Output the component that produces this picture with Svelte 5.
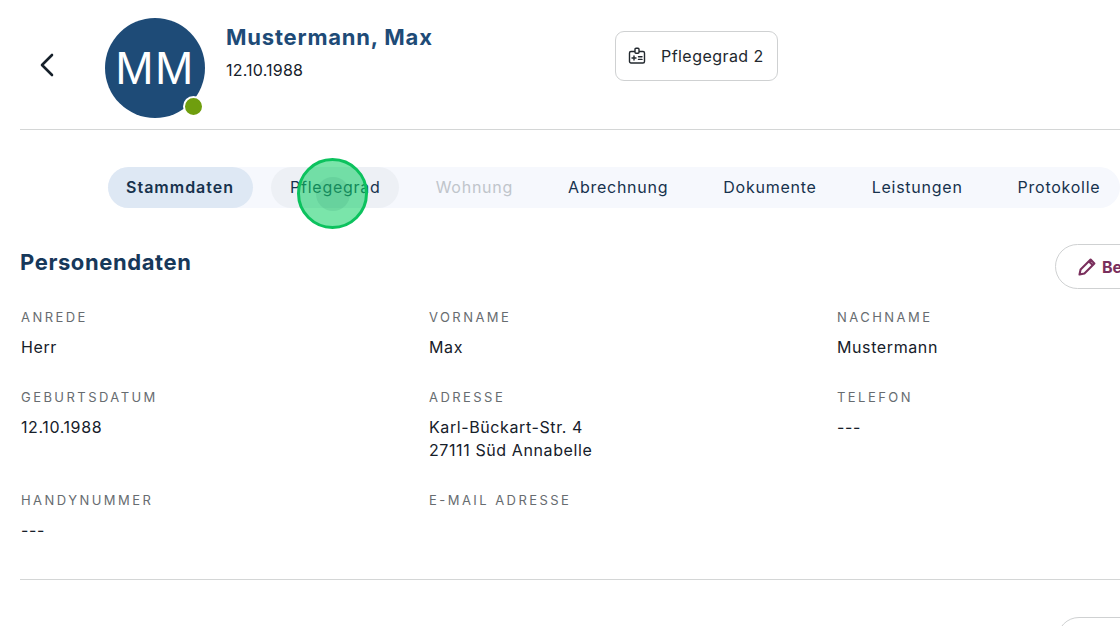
<script>
const tabs = [
  { label: 'Stammdaten', cls: 'active' },
  { label: 'Pflegegrad', cls: 'hover' },
  { label: 'Wohnung', cls: 'disabled' },
  { label: 'Abrechnung', cls: '' },
  { label: 'Dokumente', cls: '' },
  { label: 'Leistungen', cls: '' },
  { label: 'Protokolle', cls: '' }
];

const fields = [
  { label: 'Anrede', lines: ['Herr'] },
  { label: 'Vorname', lines: ['Max'] },
  { label: 'Nachname', lines: ['Mustermann'] },
  { label: 'Geburtsdatum', lines: ['12.10.1988'] },
  { label: 'Adresse', lines: ['Karl-Bückart-Str. 4', '27111 Süd Annabelle'] },
  { label: 'Telefon', lines: ['---'] },
  { label: 'Handynummer', lines: ['---'] },
  { label: 'E-Mail Adresse', lines: [] }
];
</script>

<style>
  :global(body) {
    margin: 0;
    background: #fff;
  }
  .page {
    position: relative;
    width: 1120px;
    height: 626px;
    overflow: hidden;
    font-family: Inter, "Liberation Sans", sans-serif;
    color: #16202a;
  }
  .header {
    display: flex;
    align-items: flex-start;
    height: 129px;
    margin-left: 20px;
    border-bottom: 1.5px solid #d4d6d6;
  }
  .back {
    flex: none;
    margin: 51px 0 0 17px;
    width: 20px;
    height: 28px;
  }
  .avatar {
    flex: none;
    position: relative;
    width: 100px;
    height: 100px;
    margin: 18px 0 0 48px;
    border-radius: 50%;
    background: #1e4b77;
    color: #fff;
    display: flex;
    align-items: center;
    justify-content: center;
    font-family: "Liberation Sans", sans-serif;
    font-size: 46px;
    letter-spacing: 1.5px;
    padding-bottom: 1px;
    box-sizing: border-box;
  }
  .status {
    position: absolute;
    right: 1.5px;
    bottom: 1.5px;
    width: 17px;
    height: 17px;
    border: 2px solid #fff;
    border-radius: 50%;
    background: #6f9e0e;
  }
  .who {
    flex: none;
    margin: 23px 0 0 21px;
    width: 389px;
  }
  .who h1 {
    margin: 0;
    font-size: 22px;
    line-height: 28px;
    font-weight: 700;
    color: #1e4b77;
    letter-spacing: 0.8px;
  }
  .who p {
    margin: 9px 0 0;
    font-size: 16px;
    line-height: 20px;
    letter-spacing: 0.2px;
  }
  .grade {
    flex: none;
    display: flex;
    align-items: center;
    gap: 15px;
    height: 50px;
    margin-top: 31px;
    padding: 0 13px 0 12px;
    box-sizing: border-box;
    border: 1px solid #cfd1d2;
    border-radius: 9px;
    font-size: 16px;
    letter-spacing: 0.45px;
    color: #22282e;
  }
  .tabs {
    display: flex;
    align-items: center;
    width: 1012px;
    height: 41px;
    margin: 37px 0 0 108px;
    border-radius: 21px;
    background: #f6f8fd;
    font-size: 16px;
    letter-spacing: 0.75px;
    color: #17324d;
    white-space: nowrap;
  }
  .tab {
    height: 41px;
    box-sizing: border-box;
    display: flex;
    align-items: center;
    padding: 0 18px 2px;
    border-radius: 21px;
    margin-right: 19px;
  }
  .tab.active {
    background: #dee8f4;
    font-weight: 600;
    letter-spacing: 1px;
    padding-right: 19px;
    margin-right: 18px;
  }
  .tab.hover {
    background: #edf0f5;
    padding-left: 19px;
  }
  .tab.disabled {
    color: #c0c5cb;
  }
  .touch {
    position: absolute;
    left: 297px;
    top: 158px;
    width: 71px;
    height: 71px;
    box-sizing: border-box;
    border: 3.5px solid #0cc25e;
    border-radius: 50%;
    background: rgba(12, 208, 100, 0.55);
    display: flex;
    align-items: center;
    justify-content: center;
  }
  .touch i {
    width: 34px;
    height: 34px;
    border-radius: 50%;
    background: rgba(50, 150, 110, 0.16);
  }
  .section {
    margin-left: 20px;
    height: 335px;
    border-bottom: 1.5px solid #d4d6d6;
  }
  .title {
    display: flex;
    justify-content: space-between;
    align-items: flex-start;
    height: 46px;
    margin-top: 36px;
  }
  .title h2 {
    margin: 0;
    font-size: 22px;
    line-height: 36px;
    font-weight: 700;
    letter-spacing: 0.6px;
    color: #17385a;
  }
  .edit {
    flex: none;
    display: flex;
    align-items: center;
    gap: 6px;
    width: 130px;
    height: 45px;
    margin-right: -65px;
    padding-left: 22px;
    box-sizing: border-box;
    border: 1px solid #cfd1d2;
    border-radius: 23px;
    color: #7a2f5d;
    font-size: 16px;
    font-weight: 700;
    white-space: nowrap;
  }
  .edit svg {
    flex: none;
  }
  .grid {
    display: grid;
    grid-template-columns: 408px 408px 1fr;
    margin: 18px 0 0 1px;
    row-gap: 29.5px;
  }
  .field span {
    display: block;
    font-size: 13px;
    line-height: 18px;
    letter-spacing: 2.45px;
    text-transform: uppercase;
    color: #676c70;
  }
  .field p {
    margin: 0;
    font-size: 16px;
    line-height: 22.5px;
    letter-spacing: 0.6px;
  }
  .values {
    margin-top: 10px;
    min-height: 22.5px;
  }
  .more {
    position: absolute;
    left: 1057px;
    top: 617px;
    width: 90px;
    height: 44px;
    box-sizing: border-box;
    border: 1px solid #cfd1d2;
    border-radius: 23px;
  }
</style>

<div class="page">
  <header class="header">
    <svg class="back" viewBox="0 0 20 28" fill="none" stroke="#16202a" stroke-width="2.6" stroke-linecap="round" stroke-linejoin="round"><path d="M15 4 L5 14 L15 24"/></svg>
    <div class="avatar">
      MM
      <span class="status"></span>
    </div>
    <div class="who">
      <h1>Mustermann, Max</h1>
      <p>12.10.1988</p>
    </div>
    <div class="grade">
      <svg width="18" height="18" viewBox="0 0 18 18" fill="none" stroke="#22282e" stroke-width="1.4" stroke-linejoin="round" stroke-linecap="round">
        <rect x="1.5" y="4.5" width="15" height="11.5" rx="1.5"/>
        <rect x="7" y="1.2" width="4" height="5" rx="1" fill="#fff"/>
        <path d="M4 11h4M6 9v4M10.5 9.8h3.5M10.5 12.4h3.5"/>
      </svg>
      Pflegegrad 2
    </div>
  </header>

  <nav class="tabs">
    {#each tabs as tab}
      <div class="tab {tab.cls}">{tab.label}</div>
    {/each}
  </nav>

  <section class="section">
    <div class="title">
      <h2>Personendaten</h2>
      <div class="edit">
        <svg width="18" height="18" viewBox="0 0 18 18" fill="none" stroke="#7a2f5d" stroke-width="2.1" stroke-linejoin="round"><path d="M1.5 16.5 L2.6 11.6 L12.6 1.6 L16.4 5.4 L6.4 15.4 Z M11 3.4 L14.6 7"/></svg>
        Bearbeiten
      </div>
    </div>
    <div class="grid">
      {#each fields as field}
        <div class="field">
          <span>{field.label}</span>
          <div class="values">
            {#each field.lines as line}
              <p>{line}</p>
            {/each}
          </div>
        </div>
      {/each}
    </div>
  </section>

  <div class="more"></div>
  <div class="touch"><i></i></div>
</div>
